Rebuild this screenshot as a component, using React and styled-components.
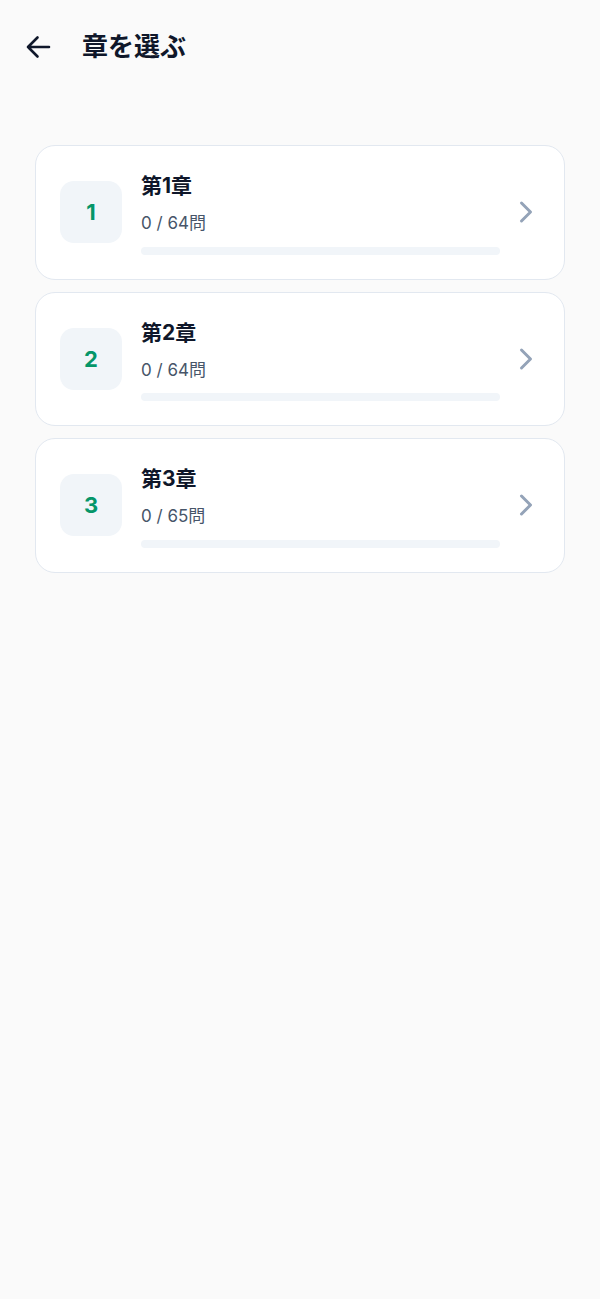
import React from 'react';
import styled, { createGlobalStyle } from 'styled-components';

const chapters = [
  { id: 1, done: 0, total: 64 },
  { id: 2, done: 0, total: 64 },
  { id: 3, done: 0, total: 65 },
];

const GlobalStyle = createGlobalStyle`
  html, body {
    margin: 0;
    padding: 0;
    background: #fafafa;
  }
  body {
    font-family: Inter, "Noto Sans CJK JP", "Noto Sans", sans-serif;
    color: #0f172a;
  }
`;

const Page = styled.div`
  min-height: 1299px;
  background: #fafafa;
`;

const Header = styled.header`
  height: 94px;
  display: flex;
  align-items: center;
  gap: 30px;
  padding: 0 24px;
  box-sizing: border-box;
`;

const BackButton = styled.button`
  border: 0;
  padding: 0;
  background: none;
  display: flex;
  cursor: pointer;
  color: #0f172a;
`;

const Title = styled.h1`
  margin: 0;
  font-size: 26px;
  font-weight: 700;
  line-height: 1.4;
  color: #0f172a;
`;

const List = styled.div`
  display: flex;
  flex-direction: column;
  gap: 12px;
  padding: 51px 35px 0;
`;

const Card = styled.div`
  display: flex;
  align-items: center;
  gap: 19px;
  padding: 24px;
  background: #fff;
  border: 1px solid #e2e8f0;
  border-radius: 20px;
`;

const Badge = styled.div`
  flex: none;
  width: 62px;
  height: 62px;
  border-radius: 14px;
  background: #f1f5f9;
  display: flex;
  align-items: center;
  justify-content: center;
  font-size: 22px;
  font-weight: 700;
  color: #059669;
`;

const Info = styled.div`
  flex: 1;
  display: flex;
  flex-direction: column;
`;

const ChapterName = styled.div`
  font-size: 21px;
  font-weight: 700;
  line-height: 31px;
  color: #0f172a;
`;

const Count = styled.div`
  margin-top: 9px;
  font-size: 17px;
  line-height: 26px;
  color: #475569;
`;

const Track = styled.div`
  margin-top: 10.5px;
  height: 8px;
  border-radius: 4px;
  background: #f1f5f9;
  overflow: hidden;
`;

const Fill = styled.div`
  height: 100%;
  background: #059669;
`;

const Chevron = styled.svg`
  flex: none;
  margin-left: -3px;
`;

const ChapterCard = ({ id, done, total }) => (
  <Card>
    <Badge>{id}</Badge>
    <Info>
      <ChapterName>第{id}章</ChapterName>
      <Count>{done} / {total}問</Count>
      <Track>
        <Fill style={{ width: `${(done / total) * 100}%` }} />
      </Track>
    </Info>
    <Chevron width="24" height="24" viewBox="0 0 24 24" fill="none">
      <polyline points="5.5 3 14.5 12 5.5 21" stroke="#94a3b8" strokeWidth="3" strokeLinecap="round" strokeLinejoin="round" />
    </Chevron>
  </Card>
);

export default function App() {
  return (
    <Page>
      <GlobalStyle />
      <Header>
        <BackButton aria-label="戻る">
          <svg width="28" height="28" viewBox="0 0 28 28" fill="none">
            <path d="M25 14H4M13.5 4.5 4 14l9.5 9.5" stroke="currentColor" strokeWidth="2.6" strokeLinecap="round" strokeLinejoin="round" />
          </svg>
        </BackButton>
        <Title>章を選ぶ</Title>
      </Header>
      <List>
        {chapters.map((c) => (
          <ChapterCard key={c.id} {...c} />
        ))}
      </List>
    </Page>
  );
}
